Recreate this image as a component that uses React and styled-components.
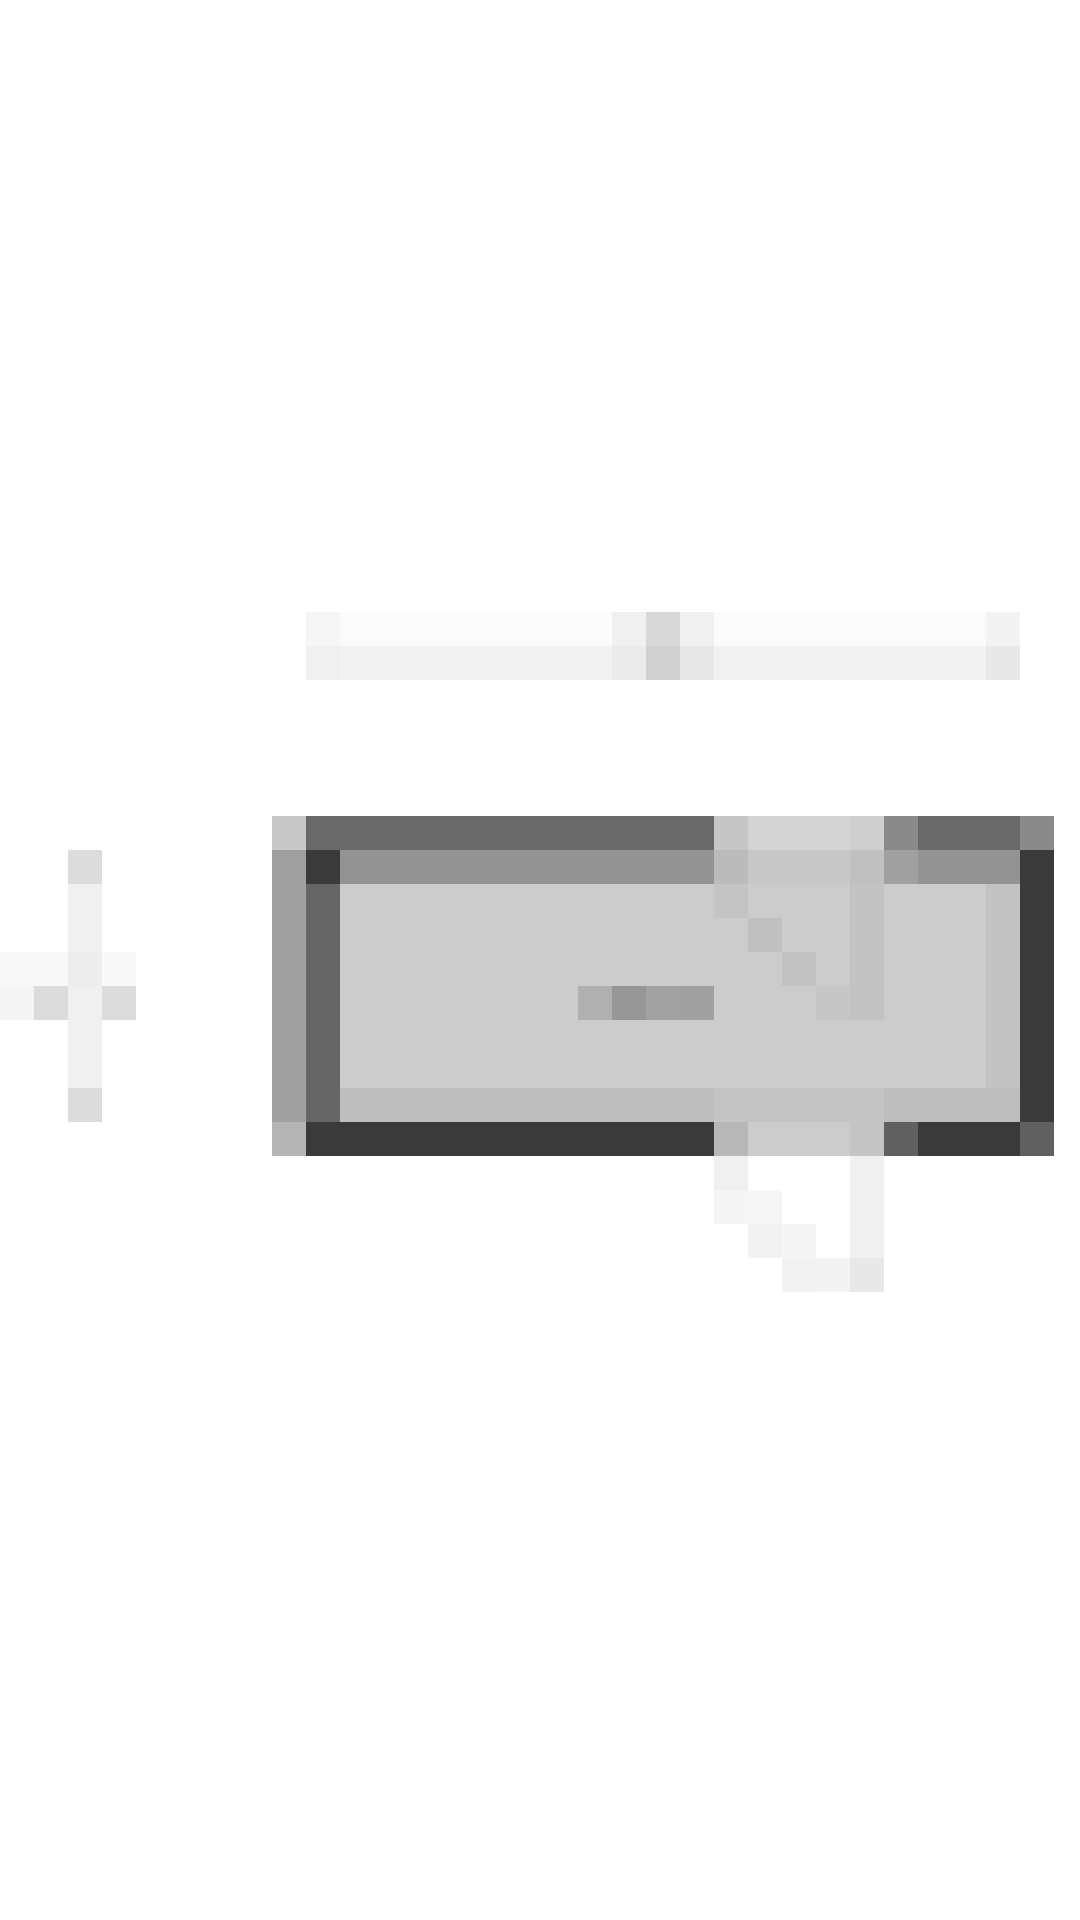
import React from "react";
import styled, { createGlobalStyle } from "styled-components";

const CELL = 34;

const GlobalStyle = createGlobalStyle`
  html, body {
    margin: 0;
    padding: 0;
    width: 1080px;
    height: 1920px;
    overflow: hidden;
    background: #ffffff;
    font-family: "Liberation Sans", Arial, sans-serif;
  }
`;

const Stage = styled.div`
  display: grid;
  grid-template-columns: repeat(32, ${CELL}px);
  grid-template-rows: repeat(56, ${CELL}px);
  width: 1080px;
  height: 1920px;
  overflow: hidden;
  background: #ffffff;
`;

const Slider = styled.div`
  grid-column: 10 / 31;
  grid-row: 19 / 21;
  display: flex;
`;

const Rail = styled.div`
  width: ${({ $cells }) => $cells * CELL}px;
  background: linear-gradient(
    ${({ $top }) => $top} 0 50%,
    ${({ $bottom }) => $bottom} 50% 100%
  );
`;

const Thumb = styled.div`
  display: flex;
`;

const Crosshair = styled.svg`
  grid-column: 1 / 5;
  grid-row: 26 / 34;
  width: ${CELL * 4}px;
  height: ${CELL * 8}px;
  shape-rendering: crispEdges;
`;

const Button = styled.button`
  grid-column: 9 / 32;
  grid-row: 25 / 35;
  display: grid;
  grid-template-columns: ${CELL}px 1fr ${CELL}px;
  grid-template-rows: ${CELL}px 1fr ${CELL}px;
  padding: 0;
  margin: 0;
  border: none;
  background: transparent;
  cursor: pointer;
`;

const Bevel = styled.div`
  background: ${({ $tone }) => $tone};
`;

const Face = styled.div`
  position: relative;
  background: #cccccc;
  padding: ${CELL * 4}px 0 0 ${CELL * 8}px;
  box-shadow:
    inset ${CELL}px 0 0 #666666,
    inset 0 ${CELL}px 0 #939393,
    inset 0 -${CELL}px 0 #bebebe,
    inset -${CELL}px 0 0 #c2c2c2;

  &::before {
    content: "";
    position: absolute;
    left: 0;
    top: 0;
    width: ${CELL}px;
    height: ${CELL}px;
    background: #3a3a3a;
  }
`;

const Caption = styled.div`
  width: ${CELL * 4}px;
  height: ${CELL}px;
  background: linear-gradient(
    90deg,
    #b0b0b0 0 25%,
    #979797 25% 50%,
    #a2a2a2 50% 75%,
    #a0a0a0 75% 100%
  );
`;

const Pointer = styled.svg`
  grid-column: 22 / 28;
  grid-row: 25 / 39;
  width: ${CELL * 6}px;
  height: ${CELL * 14}px;
  z-index: 2;
  pointer-events: none;
  shape-rendering: crispEdges;
`;

const crossCells = [
  [2, 0, "#dcdcdc"],
  [2, 1, "#f0f0f0"],
  [2, 2, "#f0f0f0"],
  [0, 3, "#f8f8f8"],
  [1, 3, "#f8f8f8"],
  [2, 3, "#ededed"],
  [3, 3, "#f8f8f8"],
  [0, 4, "#f5f5f5"],
  [1, 4, "#dcdcdc"],
  [2, 4, "#f0f0f0"],
  [3, 4, "#dcdcdc"],
  [2, 5, "#f0f0f0"],
  [2, 6, "#f0f0f0"],
  [2, 7, "#dcdcdc"],
];

// pointer drawn over the button, in cells (x: from col 21, y: from row 24)
const pointerCells = [
  [0, 0, 1, "#c6c6c6"],
  [1, 0, 3, "#d4d4d4"],
  [4, 0, 1, "#cfcfcf"],
  [5, 0, 1, "#8a8a8a"],
  [0, 1, 1, "#bbbbbb"],
  [1, 1, 3, "#c8c8c8"],
  [4, 1, 1, "#c0c0c0"],
  [5, 1, 1, "#a0a0a0"],
  [0, 2, 1, "#c4c4c4"],
  [4, 2, 1, "#c2c2c2"],
  [1, 3, 1, "#c0c0c0"],
  [4, 3, 1, "#c2c2c2"],
  [2, 4, 1, "#c2c2c2"],
  [4, 4, 1, "#c2c2c2"],
  [3, 5, 1, "#c6c6c6"],
  [4, 5, 1, "#c2c2c2"],
  [0, 8, 5, "#c4c4c4"],
  [0, 9, 1, "#b8b8b8"],
  [1, 9, 3, "#cccccc"],
  [4, 9, 1, "#c4c4c4"],
  [5, 9, 1, "#606060"],
  [0, 10, 1, "#f0f0f0"],
  [4, 10, 1, "#f0f0f0"],
  [0, 11, 1, "#f5f5f5"],
  [1, 11, 1, "#f6f6f6"],
  [4, 11, 1, "#f0f0f0"],
  [1, 12, 1, "#f2f2f2"],
  [2, 12, 1, "#f5f5f5"],
  [4, 12, 1, "#f0f0f0"],
  [2, 13, 1, "#f2f2f2"],
  [3, 13, 1, "#f3f3f3"],
  [4, 13, 1, "#e8e8e8"],
];

const App = () => {
  return (
    <>
      <GlobalStyle />
      <Stage>
        <Slider>
          <Rail $cells={1} $top="#f6f6f6" $bottom="#f0f0f0" />
          <Rail $cells={8} $top="#fbfbfb" $bottom="#f2f2f2" />
          <Thumb>
            <Rail $cells={1} $top="#f0f0f0" $bottom="#ebebeb" />
            <Rail $cells={1} $top="#d8d8d8" $bottom="#d0d0d0" />
            <Rail $cells={1} $top="#f0f0f0" $bottom="#e8e8e8" />
          </Thumb>
          <Rail $cells={8} $top="#fbfbfb" $bottom="#f2f2f2" />
          <Rail $cells={1} $top="#f3f3f3" $bottom="#e8e8e8" />
        </Slider>

        <Crosshair viewBox="0 0 4 8">
          {crossCells.map(([x, y, fill], i) => (
            <rect key={i} x={x} y={y} width="1" height="1" fill={fill} />
          ))}
        </Crosshair>

        <Button type="button">
          <Bevel $tone="#c8c8c8" />
          <Bevel $tone="#696969" />
          <Bevel $tone="#8a8a8a" />
          <Bevel $tone="#a0a0a0" />
          <Face>
            <Caption />
          </Face>
          <Bevel $tone="#3a3a3a" />
          <Bevel $tone="#b5b5b5" />
          <Bevel $tone="#3a3a3a" />
          <Bevel $tone="#606060" />
        </Button>

        <Pointer viewBox="0 0 6 14">
          {pointerCells.map(([x, y, w, fill], i) => (
            <rect key={i} x={x} y={y} width={w} height="1" fill={fill} />
          ))}
        </Pointer>
      </Stage>
    </>
  );
};

export default App;
